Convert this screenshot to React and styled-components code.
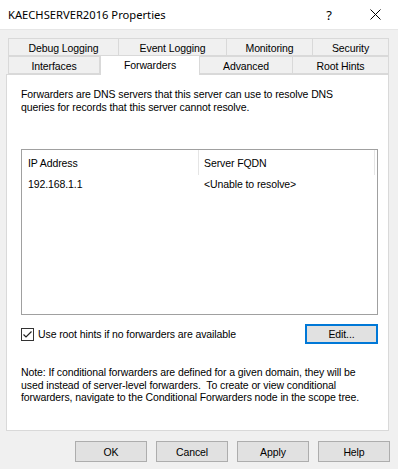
import React from 'react'
import styled, { createGlobalStyle } from 'styled-components'

const GlobalStyle = createGlobalStyle`
  html, body {
    margin: 0;
    padding: 0;
    background: #f0f0f0;
  }
  body {
    font-family: "Liberation Sans", Arial, sans-serif;
    font-size: 10.5px;
    letter-spacing: -0.1px;
    color: #000;
  }
`;

const Window = styled.div`
  width: 398px;
  height: 469px;
  background: #f0f0f0;
  display: flex;
  flex-direction: column;
  overflow: hidden;
`;

const TitleBar = styled.div`
  height: 29px;
  background: #fff;
  border-bottom: 1px solid #e6e6e6;
  display: flex;
  align-items: center;
  padding-left: 8px;
`;

const Title = styled.div`
  flex: 1;
  font-family: "Noto Sans", "Open Sans", sans-serif;
  font-size: 11.2px;
  letter-spacing: 0;
  color: #000;
`;

const TitleButton = styled.div`
  width: 46px;
  height: 29px;
  display: flex;
  align-items: center;
  justify-content: center;
  font-family: "Noto Sans", sans-serif;
  font-size: 13px;
`;

const Body = styled.div`
  padding: 8px 0 0 6px;
  display: flex;
  flex-direction: column;
`;

const TabStrip = styled.div`
  display: flex;
  flex-direction: column;
  padding-left: 2px;
`;

const TabRow = styled.div`
  display: flex;
  height: 18px;
  align-items: flex-end;
`;

const Tab = styled.div`
  position: relative;
  width: ${(props) => props.w}px;
  height: ${(props) => (props.active ? "20px" : "18px")};
  box-sizing: border-box;
  border: 1px solid #d9d9d9;
  border-left: ${(props) => (props.first || props.active ? "1px solid #d9d9d9" : "none")};
  border-bottom: ${(props) => (props.active ? "none" : "1px solid #d9d9d9")};
  margin-bottom: ${(props) => (props.active ? "-1px" : "0")};
  background: ${(props) => (props.active ? "#fff" : "#f0f0f0")};
  z-index: ${(props) => (props.active ? 2 : 1)};
  display: flex;
  align-items: center;
  justify-content: center;
  padding-bottom: ${(props) => (props.active ? "3px" : "0")};
  padding-top: 1px;
`;

const Panel = styled.div`
  width: 383px;
  height: 357px;
  box-sizing: border-box;
  background: #fff;
  border: 1px solid #d9d9d9;
  padding: 13px 10px 0 14px;
  display: flex;
  flex-direction: column;
`;

const Para = styled.p`
  margin: 0;
  line-height: 12.5px;
  white-space: nowrap;
  margin-top: ${(props) => props.mt || 0}px;
`;

const ListBox = styled.div`
  margin-top: 36px;
  height: 166px;
  box-sizing: border-box;
  border: 1px solid #a0a0a0;
  display: flex;
  flex-direction: column;
`;

const ListRow = styled.div`
  display: grid;
  grid-template-columns: 177px 176px 1fr;
  height: ${(props) => (props.header ? "25px" : "17px")};
  align-items: ${(props) => (props.header ? "stretch" : "center")};
`;

const Cell = styled.div`
  display: flex;
  align-items: center;
  padding-left: ${(props) => (props.first ? "6px" : "5px")};
  border-right: ${(props) => (props.header ? "1px solid #e5e5e5" : "none")};
`;

const OptionRow = styled.div`
  margin-top: 9px;
  display: flex;
  align-items: center;
  justify-content: space-between;
  height: 20px;
`;

const CheckLabel = styled.label`
  display: flex;
  align-items: center;
  gap: 4px;
`;

const CheckBox = styled.span`
  width: 13px;
  height: 13px;
  box-sizing: border-box;
  border: 1px solid #333;
  background: #fff;
  display: flex;
  align-items: center;
  justify-content: center;
`;

const Button = styled.button`
  width: ${(props) => (props.focused ? "73px" : "72px")};
  height: ${(props) => (props.focused ? "20px" : "21px")};
  box-sizing: border-box;
  background: #e1e1e1;
  border: ${(props) => (props.focused ? "2px solid #0078d7" : "1px solid #adadad")};
  font-family: "Liberation Sans", Arial, sans-serif;
  font-size: 10.5px;
  letter-spacing: -0.1px;
  color: #000;
  padding: 0;
`;

const ButtonBar = styled.div`
  display: flex;
  justify-content: flex-end;
  gap: 9px;
  margin-top: 10px;
  padding-right: 8px;
`;

const tabsTop = [
  { label: "Debug Logging", w: 111 },
  { label: "Event Logging", w: 108 },
  { label: "Monitoring", w: 86 },
  { label: "Security", w: 76 },
];

const tabsBottom = [
  { label: "Interfaces", w: 92 },
  { label: "Forwarders", w: 100, active: true },
  { label: "Advanced", w: 93 },
  { label: "Root Hints", w: 96 },
];

const App = () => {
  return (
    <Window>
      <GlobalStyle />
      <TitleBar>
        <Title>KAECHSERVER2016 Properties</Title>
        <TitleButton>?</TitleButton>
        <TitleButton>
          <svg width="11" height="11" viewBox="0 0 11 11">
            <path d="M0.5 0.5 L10.5 10.5 M10.5 0.5 L0.5 10.5" stroke="#000" strokeWidth="1" fill="none" />
          </svg>
        </TitleButton>
      </TitleBar>
      <Body>
        <TabStrip>
          <TabRow>
            {tabsTop.map((t, i) => (
              <Tab key={t.label} w={t.w} first={i === 0}>{t.label}</Tab>
            ))}
          </TabRow>
          <TabRow>
            {tabsBottom.map((t, i) => (
              <Tab key={t.label} w={t.w} first={i === 0} active={t.active}>{t.label}</Tab>
            ))}
          </TabRow>
        </TabStrip>
        <Panel>
          <Para>
            Forwarders are DNS servers that this server can use to resolve DNS<br />
            queries for records that this server cannot resolve.
          </Para>
          <ListBox>
            <ListRow header>
              <Cell header first>IP Address</Cell>
              <Cell header>Server FQDN</Cell>
              <Cell />
            </ListRow>
            <ListRow>
              <Cell first>192.168.1.1</Cell>
              <Cell>&lt;Unable to resolve&gt;</Cell>
              <Cell />
            </ListRow>
          </ListBox>
          <OptionRow>
            <CheckLabel>
              <CheckBox>
                <svg width="11" height="11" viewBox="0 0 11 11">
                  <path d="M1.5 5.5 L4 8 L9.5 2.5" stroke="#222" strokeWidth="1.2" fill="none" />
                </svg>
              </CheckBox>
              Use root hints if no forwarders are available
            </CheckLabel>
            <Button focused>Edit...</Button>
          </OptionRow>
          <Para mt={22}>
            Note: If conditional forwarders are defined for a given domain, they will be<br />
            used instead of server-level forwarders.&nbsp; To create or view conditional<br />
            forwarders, navigate to the Conditional Forwarders node in the scope tree.
          </Para>
        </Panel>
        <ButtonBar>
          <Button>OK</Button>
          <Button>Cancel</Button>
          <Button>Apply</Button>
          <Button>Help</Button>
        </ButtonBar>
      </Body>
    </Window>
  )
}

export default App
